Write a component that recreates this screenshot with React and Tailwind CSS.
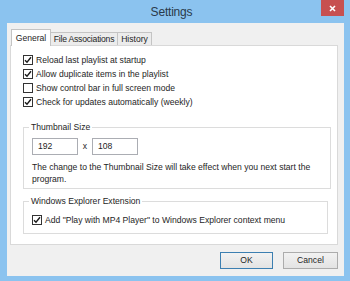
import React from "react";

const font = { fontFamily: '"Liberation Sans", Arial, sans-serif' };

function Check({ checked }) {
  return (
    <span className="w-[10px] h-[10px] border border-[#333333] bg-white flex items-center justify-center shrink-0">
      {checked && (
        <svg width="8" height="8" viewBox="0 0 8 8">
          <path d="M1 4.2 L3 6.3 L7 1.3" fill="none" stroke="#1a1a1a" strokeWidth="1.4" />
        </svg>
      )}
    </span>
  );
}

function Row({ checked, children }) {
  return (
    <div className="h-[14px] flex items-center gap-[3px]">
      <Check checked={checked} />
      <span className="leading-[14px]">{children}</span>
    </div>
  );
}

export default function App() {
  return (
    <div
      className="w-[350px] h-[281px] bg-[#8bc3ef] flex flex-col text-[8.6px] text-[#1e1e1e] overflow-hidden"
      style={font}
    >
      {/* title bar */}
      <div className="h-[23px] flex items-start">
        <div className="flex-1 h-[23px] flex items-center justify-center pl-[22px] text-[12px] text-[#2a3a4a] tracking-[-0.2px]">
          Settings
        </div>
        <div className="w-[23px] h-[16px] mr-[6px] bg-[#c75050] flex items-center justify-center">
          <svg width="7" height="7" viewBox="0 0 7 7">
            <path d="M1 1 L6 6 M6 1 L1 6" stroke="white" strokeWidth="1.6" />
          </svg>
        </div>
      </div>

      {/* client area */}
      <div className="ml-[7px] w-[337px] h-[253px] bg-[#f0f0f0] flex flex-col">
        {/* tabs */}
        <div className="pt-[6px] pl-[4px] flex items-end h-[22px]">
          <div className="relative z-10 h-[17px] -mb-px w-[40px] bg-white border border-[#c4c4c4] border-b-0 flex items-center justify-center">
            General
          </div>
          <div className="h-[13px] w-[67px] bg-[#ececec] border border-[#c4c4c4] border-b-0 border-l-0 flex items-center justify-center tracking-[-0.2px]">
            File Associations
          </div>
          <div className="h-[13px] w-[34px] bg-[#ececec] border border-[#c4c4c4] border-b-0 border-l-0 flex items-center justify-center">
            History
          </div>
        </div>

        {/* panel */}
        <div className="ml-[3px] w-[328px] h-[200px] bg-white border border-[#d9d9d9] flex flex-col">
          <div className="pt-[7px] pl-[12px] flex flex-col">
            <Row checked>Reload last playlist at startup</Row>
            <Row checked>Allow duplicate items in the playlist</Row>
            <Row>Show control bar in full screen mode</Row>
            <Row checked>Check for updates automatically (weekly)</Row>
          </div>

          <fieldset className="mt-[12px] ml-[12px] w-[305px] border border-[#dcdcdc] px-[8px] pb-[3px]">
            <legend className="ml-[-3px] px-[2px] leading-[12px]">Thumbnail Size</legend>
            <div className="mt-[5px] flex items-center">
              <div className="w-[46px] h-[17px] border border-[#abadb3] bg-white flex items-center pl-[5px]">192</div>
              <span className="w-[14px] text-center">x</span>
              <div className="w-[46px] h-[17px] border border-[#abadb3] bg-white flex items-center pl-[5px]">108</div>
            </div>
            <p className="mt-[6px] leading-[12px] w-[290px]">
              The change to the Thumbnail Size will take effect when you next start the program.
            </p>
          </fieldset>

          <fieldset className="mt-[6px] ml-[12px] w-[305px] border border-[#dcdcdc] px-[8px] pb-[6px]">
            <legend className="ml-[-3px] px-[2px] leading-[12px]">Windows Explorer Extension</legend>
            <div className="mt-[6px]">
              <Row checked>Add "Play with MP4 Player" to Windows Explorer context menu</Row>
            </div>
          </fieldset>
        </div>

        {/* buttons */}
        <div className="mt-[7px] flex justify-end gap-[10px] pr-[6px]">
          <div className="w-[53px] h-[17px] border border-[#3c7fb1] bg-gradient-to-b from-[#f2f2f2] to-[#e3e3e3] flex items-center justify-center">
            OK
          </div>
          <div className="w-[55px] h-[17px] border border-[#acacac] bg-gradient-to-b from-[#f2f2f2] to-[#e3e3e3] flex items-center justify-center">
            Cancel
          </div>
        </div>
      </div>
    </div>
  );
}
